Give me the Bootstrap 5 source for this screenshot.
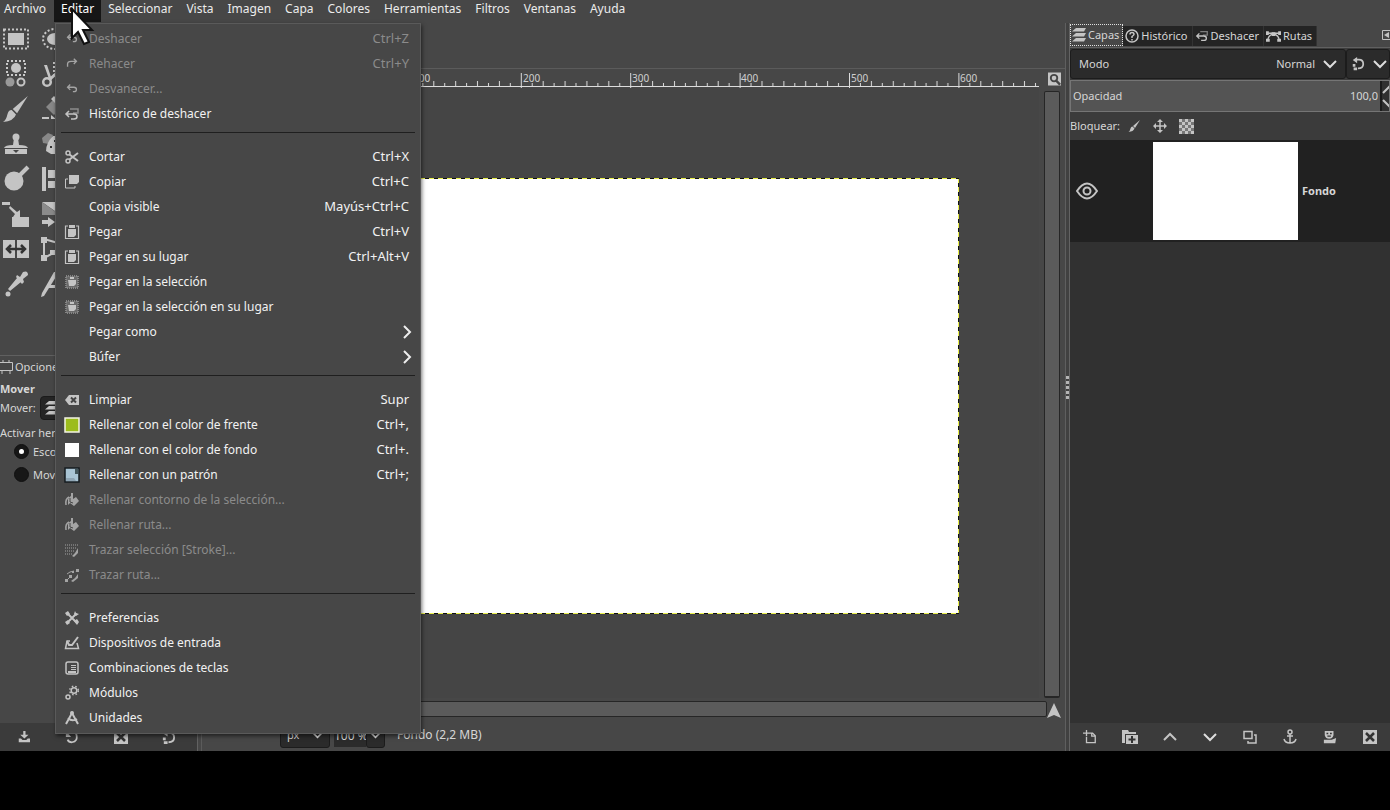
<!DOCTYPE html>
<html lang="es">
<head>
<meta charset="utf-8">
<meta name="viewport" content="width=device-width, initial-scale=1">
<title>Editor de imágenes</title>
<link href="https://cdn.jsdelivr.net/npm/bootstrap@5.3.0/dist/css/bootstrap.min.css" rel="stylesheet">
<style>
body{background:#000;color:#d6d6d6;font-family:"Noto Sans","Open Sans",sans-serif;font-size:12px;line-height:16px}
.studio{background:#474747;margin-bottom:59px;min-height:0}
svg{display:block;flex:none;fill:#c4c4c4;stroke:none;stroke-width:1.5}
.ln{fill:none;stroke:#c4c4c4}
.small-ui{font-family:"Noto Sans","Open Sans",sans-serif;font-size:11px;line-height:14px}
/* menu bar */
.menubar{height:23px;padding:0;align-items:stretch}
.menubar .navbar-nav .nav-link{padding:1px 7px 0;color:#ececec;height:22px;line-height:16px;white-space:nowrap}
.menubar .navbar-nav .first-item{padding-left:4px;padding-right:8px}
.menubar .navbar-nav .nav-link.active{background:#161616;color:#fff}
.edit-menu{--bs-dropdown-bg:#474747;margin:0!important;top:23px!important;left:1px!important;width:366px;padding:2px 0 3px;border:1px solid #5a5a5a;border-radius:0;font-size:12px;box-shadow:1px 2px 4px rgba(0,0,0,.55)}
.edit-menu .dropdown-item{display:flex;align-items:center;height:25px;padding:0 11px 0 8px;color:#f2f2f2;line-height:16px}
.edit-menu .dropdown-item svg,.edit-menu .slot{width:16px;height:16px;margin-right:9px;flex:none}
.edit-menu .dropdown-item:disabled{color:#8b8b8b}
.edit-menu .dropdown-item:disabled svg{opacity:.75}
.edit-menu .keys{margin-left:auto;font-size:13px;padding-bottom:2px}
.edit-menu .more{margin:0 -4px 0 auto!important;width:12px!important}
.edit-menu .dropdown-divider{margin:6px 5px 11px;border-top:1px solid #1f1f1f;opacity:1}
.pointer{position:absolute;left:17px;top:8px;z-index:1100;pointer-events:none}
/* left side */
.tool-dock{width:198px;border-right:1px solid #626262}
.tools{display:grid;grid-template-columns:repeat(2,34px);grid-auto-rows:35px;height:332px;align-content:start}
.tools button,.bar button,.plain{background:none;border:0;padding:0;color:inherit}
.tools button{display:flex;align-items:flex-start;padding:2px 0 0 2px}
.options{border-top:1px solid #606060}
.options label,.options span{white-space:nowrap}
.opt-tab{height:22px}
.opt-note{padding-top:6px}
.mode-btn{width:60px;height:24px;background:#252525!important;border:1px solid #1b1b1b!important;border-radius:4px}
.radio-dark{appearance:none;width:15px;height:15px;border-radius:50%;background:#171717;border:1px solid #111;margin:0 4px 0 14px;display:grid;place-content:center}
.radio-dark:checked::after{content:"";width:5px;height:5px;border-radius:50%;background:#fff}
.bar{height:28px;background:#3b3b3b;display:grid;grid-auto-flow:column;grid-auto-columns:1fr}
.bar button{display:flex;justify-content:center;align-items:center}
.tool-dock .bar{padding-right:4px}
/* image window */
.image-pane{margin-top:45px;border-top:1px solid #5b5b5b;border-left:1px solid #5b5b5b;margin-left:3px}
.ruler-row{height:19px}
.ruler text{font:10px "Noto Sans",sans-serif;fill:#cfcfcf}
.ruler line{stroke:#dcdcdc;stroke-width:1}
.side-ruler{width:20px}
.canvas-area{background:#454545;padding-top:6px}
.sheet{width:656px;height:436px;background:
 repeating-linear-gradient(90deg,#eaf04a 0 5px,#111 5px 9px) top/100% 1px no-repeat,
 repeating-linear-gradient(90deg,#eaf04a 0 5px,#111 5px 9px) bottom/100% 1px no-repeat,
 repeating-linear-gradient(#eaf04a 0 5px,#111 5px 9px) right/1px 100% no-repeat,#fff}
.gutter{width:26px;padding:3px 5px 0 5px}
.thumb-y{width:16px;background:#5b5b5b;border:1px solid #262626;border-bottom-width:2px;border-radius:2px}
.scroll-row{height:18px;margin-top:3px}
.thumb-x{height:16px;background:#5b5b5b;border:1px solid #262626;border-radius:2px;margin-left:24px}
.status{height:32px;padding-left:78px}
.status select,.status input,.combo select{appearance:none;background:transparent;border:0;color:inherit;padding:0;outline:0;font:inherit}
.dark-box{background:#2b2b2b;border:1px solid #1c1c1c;border-radius:3px}
.unit{width:50px;height:26px;padding:0 6px}
.zoom-in{width:32px;background:#2b2b2b!important;height:24px}
.zoom-dd{width:19px;height:26px;padding:0 3px}
/* right side */
.split{width:5px;border-right:1px solid #636363;background:#414141;border-left:1px solid #5f5f5f}
.split i{width:3px;height:3px;background:#b5b5b5;margin:1px 0;display:block}
.layer-dock{width:320px;background:#3b3b3b}
.dock-tabs{height:25px;padding-top:1px;background:#474747;border-bottom:1px solid #606060}
.dock-tabs button{height:20px;margin-top:2px;border:0;border-right:1px solid #333;padding:0 4px 0 2px;background:#242424;color:#d6d6d6;display:flex;align-items:center;gap:2px}
.dock-tabs button.on{background:#474747;border:1px dotted #e0e0e0;height:22px;margin-top:0;padding:0 3px 0 1px}
.dual{margin:1px 0}
.combo{height:30px}
.combo.side{width:44px}
.combo select{flex:1;text-align-last:right;margin-right:8px;min-width:0}
.opacity{height:32px;background:#545454;border:1px solid #757575;overflow:hidden}
.opacity label{padding-left:2px}
.opacity input{appearance:none;width:60px;text-align:right;background:none;border:0;color:inherit;padding:0 2px 0 0;font:inherit}
.spin{width:9px;background:#303030;border-left:2px solid #1b1b1b;overflow:hidden}
.lock-row{height:28px}
.layers{background:#313131}
.layer-row{height:102px;background:#212121;padding-left:6px}
.preview{width:145px;height:98px;background:#fff;margin-left:55px}
.dim{opacity:.55}
</style>
</head>
<body class="vh-100 d-flex flex-column overflow-hidden">

<svg width="0" height="0" class="position-absolute" aria-hidden="true"><defs>
<symbol id="undo" viewBox="-1 0 18 18"><path d="M6 4 3 7l3 3M3 7h7q3 0 3 2.500T10 12H9" class="ln"/></symbol>
<symbol id="redo" viewBox="-1 0 18 18"><path d="M10 3l3 3-3 3M13 6H7Q3 6 3 9v3" class="ln"/></symbol>
<symbol id="hist" viewBox="0 0 16 16"><path d="M6 3h8v4H9" class="ln dim"/><path d="M5 5 2 8l3 3M2 8h8q3 0 3 2.500T10 13H7" class="ln"/></symbol>
<symbol id="cut" viewBox="0 0 16 16"><g class="ln"><circle cx="4" cy="4" r="2"/><circle cx="4" cy="12" r="2"/><path d="M5.500 5.500 14 12M5.500 10.500 14 4" stroke-width="2"/></g></symbol>
<symbol id="copy" viewBox="0 0 16 16"><path d="M5 1h10v7l-2 2H5z"/><path d="M4 5H1.500v9H11v-2" class="ln" stroke-width="1"/></symbol>
<symbol id="paste" viewBox="0 0 16 16"><path d="M4 2H1.500v12.500h13V2H12" class="ln" stroke-width="1.200"/><path d="M5 1h6v3H5zM4 5h8v6l-2 2H4z"/></symbol>
<symbol id="pastein" viewBox="0 0 16 16"><path d="M2 2h12v12H2z" fill="#6a6a6a" stroke="#858585" stroke-width="2" stroke-dasharray="1 1"/><path d="M6 3h4v2H6zM4 6h8v4l-2 2H5z"/></symbol>
<symbol id="clear" viewBox="0 0 16 16"><path d="M1 8l4-5h10v10H5z"/><path d="M7 5.500l5 5m0-5-5 5" stroke="#444" stroke-width="2"/></symbol>
<symbol id="bucket" viewBox="0 0 16 16"><path d="M2 13q-1-6 3-8" class="ln"/><path d="M4 7q1-2 3-3V1h2v6l3-2 3 4-5 5-4-3-2 2z"/><path d="M6 6v4l3 1" class="ln" style="stroke:#474747" stroke-width="1"/></symbol>
<symbol id="strokesel" viewBox="0 0 16 16"><path d="M1 3h13M1 6h12M1 9h9M1 12h8" stroke="#858585" stroke-width="2" stroke-dasharray="1 1"/><path d="M14 6v5l-4 4-2-1 3-3z"/></symbol>
<symbol id="strokepath" viewBox="0 0 16 16"><path d="M3 13l3-3m6-5 2-3M3 7l3-2 4-1" class="ln" stroke-width="1"/><path d="M14 7v4l-5 4-2-1 4-3zM1 12h3v3H1zM5 8h3v3H5zM12 2h3v3h-3zM8 4h2v2H8z"/></symbol>
<symbol id="prefs" viewBox="0 0 16 16"><path d="M3 3l10 10M12.500 3.500 3 13" class="ln" stroke-width="2"/><path d="M1 3l3-2 2 3-3 2zM10 11l3-2 2 3-2 3zM10 4l1-3 1 2 3 1-3 2zM1 12l3-2 2 3-3 2z"/></symbol>
<symbol id="input" viewBox="0 0 16 16"><path d="M6 6H3L1.500 13.500h13L13 8" class="ln"/><path d="M14 2 8 10H5L3 6" class="ln" stroke-width="2"/></symbol>
<symbol id="keys" viewBox="0 0 16 16"><rect x="2" y="2" width="12" height="12" rx="2" class="ln"/><path d="M7 5h5v1H7zM7 7h5v1H7zM7 9h5v1H7zM4 11h8v2H4z"/></symbol>
<symbol id="gears" viewBox="0 0 16 16"><circle cx="10" cy="5.500" r="2.800" class="ln"/><circle cx="10" cy="5.500" r="4.300" class="ln" stroke-dasharray="1.500 2"/><circle cx="4" cy="12" r="2" class="ln"/></symbol>
<symbol id="units" viewBox="0 0 16 16"><path d="M2 14 8 3l6 11M4 8q4 4 9 1" class="ln" stroke-width="2"/><circle cx="8" cy="3" r="2"/></symbol>
<symbol id="right" viewBox="0 0 12 16"><path d="M3 2l6 6-6 6" fill="none" stroke="#eee" stroke-width="2"/></symbol>
<symbol id="down" viewBox="0 0 14 14"><path d="M1 4l6 6 6-6" fill="none" stroke="#ddd" stroke-width="2"/></symbol>
<symbol id="brush" viewBox="0 0 26 26"><path d="M24 1 14 17l-4-4zM9 14l4 4q-2 6-12 7 3-2 4-7 1-4 4-4z"/></symbol>
<symbol id="reset" viewBox="0 0 16 16"><path d="M5 3h4q5 0 5 5t-6 5" class="ln" stroke-width="2"/><path d="M7 0v7L2 3.500zM2 8h3v3H2zM3 12h4v3H3z"/></symbol>
<symbol id="trash" viewBox="0 0 16 16"><path d="M1 1h14v14H1z"/><path d="M4 4l8 8m0-8-8 8" stroke="#333" stroke-width="2.500"/></symbol>
<symbol id="sheets" viewBox="0 0 14 16"><path d="M4 1h10l-2 3.500H0zM4 6h10l-2 3.500H0zM4 11h10l-2 3.500H0z"/></symbol>
</defs></svg>

<div class="studio flex-fill d-flex flex-column position-relative">
  <nav class="navbar navbar-expand menubar">
    <ul class="navbar-nav">
      <li class="nav-item"><a class="nav-link first-item" href="#">Archivo</a></li>
      <li class="nav-item dropdown"><a class="nav-link active" href="#">Editar</a>
        <svg class="pointer" width="24" height="38" viewBox="0 0 24 38"><path d="M1 1v29l6-6 6 12 5-2-6-12h9z" fill="#fff" stroke="#111" stroke-width="2"/></svg>
        <div class="dropdown-menu edit-menu show">
          <button class="dropdown-item" disabled><svg><use href="#undo"/></svg>Deshacer<span class="keys">Ctrl+Z</span></button>
          <button class="dropdown-item" disabled><svg><use href="#redo"/></svg>Rehacer<span class="keys">Ctrl+Y</span></button>
          <button class="dropdown-item" disabled><svg><use href="#undo"/></svg>Desvanecer...</button>
          <button class="dropdown-item"><svg><use href="#hist"/></svg>Histórico de deshacer</button>
          <hr class="dropdown-divider">
          <button class="dropdown-item"><svg><use href="#cut"/></svg>Cortar<span class="keys">Ctrl+X</span></button>
          <button class="dropdown-item"><svg><use href="#copy"/></svg>Copiar<span class="keys">Ctrl+C</span></button>
          <button class="dropdown-item"><span class="slot"></span>Copia visible<span class="keys">Mayús+Ctrl+C</span></button>
          <button class="dropdown-item"><svg><use href="#paste"/></svg>Pegar<span class="keys">Ctrl+V</span></button>
          <button class="dropdown-item"><svg><use href="#paste"/></svg>Pegar en su lugar<span class="keys">Ctrl+Alt+V</span></button>
          <button class="dropdown-item"><svg><use href="#pastein"/></svg>Pegar en la selección</button>
          <button class="dropdown-item"><svg><use href="#pastein"/></svg>Pegar en la selección en su lugar</button>
          <button class="dropdown-item"><span class="slot"></span>Pegar como<svg class="more"><use href="#right"/></svg></button>
          <button class="dropdown-item"><span class="slot"></span>Búfer<svg class="more"><use href="#right"/></svg></button>
          <hr class="dropdown-divider">
          <button class="dropdown-item"><svg><use href="#clear"/></svg>Limpiar<span class="keys">Supr</span></button>
          <button class="dropdown-item"><svg viewBox="0 0 16 16"><path d="M1 1h14v14H1z" fill="#9cbc1c" stroke="#f4f4e4"/></svg>Rellenar con el color de frente<span class="keys">Ctrl+,</span></button>
          <button class="dropdown-item"><svg viewBox="0 0 16 16"><path d="M1 1h14v14H1z" fill="#fff"/></svg>Rellenar con el color de fondo<span class="keys">Ctrl+.</span></button>
          <button class="dropdown-item"><svg viewBox="0 0 16 16"><path d="M1 1h14v14H1z" fill="#a9c4d4" stroke="#161c20"/><path d="M11 2h3v5h-3z" fill="#43565b"/><path d="M2 11h8l2 3H2z" fill="#8fa5b4"/></svg>Rellenar con un patrón<span class="keys">Ctrl+;</span></button>
          <button class="dropdown-item" disabled><svg><use href="#bucket"/></svg>Rellenar contorno de la selección...</button>
          <button class="dropdown-item" disabled><svg><use href="#bucket"/></svg>Rellenar ruta...</button>
          <button class="dropdown-item" disabled><svg><use href="#strokesel"/></svg>Trazar selección [Stroke]...</button>
          <button class="dropdown-item" disabled><svg><use href="#strokepath"/></svg>Trazar ruta...</button>
          <hr class="dropdown-divider">
          <button class="dropdown-item"><svg><use href="#prefs"/></svg>Preferencias</button>
          <button class="dropdown-item"><svg><use href="#input"/></svg>Dispositivos de entrada</button>
          <button class="dropdown-item"><svg><use href="#keys"/></svg>Combinaciones de teclas</button>
          <button class="dropdown-item"><svg><use href="#gears"/></svg>Módulos</button>
          <button class="dropdown-item"><svg><use href="#units"/></svg>Unidades</button>
        </div>
      </li>
      <li class="nav-item"><a class="nav-link" href="#">Seleccionar</a></li>
      <li class="nav-item"><a class="nav-link" href="#">Vista</a></li>
      <li class="nav-item"><a class="nav-link" href="#">Imagen</a></li>
      <li class="nav-item"><a class="nav-link" href="#">Capa</a></li>
      <li class="nav-item"><a class="nav-link" href="#">Colores</a></li>
      <li class="nav-item"><a class="nav-link" href="#">Herramientas</a></li>
      <li class="nav-item"><a class="nav-link" href="#">Filtros</a></li>
      <li class="nav-item"><a class="nav-link" href="#">Ventanas</a></li>
      <li class="nav-item"><a class="nav-link" href="#">Ayuda</a></li>
    </ul>
  </nav>

  <div class="d-flex flex-fill">
    <aside class="tool-dock d-flex flex-column small-ui">
      <div class="tools">
        <button aria-label="Selección rectangular"><svg width="28" height="28" viewBox="0 0 28 28"><path d="M2 4.500h24v19H2z" fill="none" stroke="#c8c8c8" stroke-width="2" stroke-dasharray="2 2"/><path d="M6 8h16v12H6z"/></svg></button>
        <button aria-label="Selección elíptica"><svg width="28" height="28" viewBox="0 0 28 28"><ellipse cx="19" cy="14" rx="8" ry="6"/><ellipse cx="19" cy="14" rx="12" ry="10" fill="none" stroke="#c8c8c8" stroke-width="2" stroke-dasharray="2 2"/></svg></button>
        <button aria-label="Selección por color"><svg width="28" height="28" viewBox="0 0 28 28"><path d="M5 1h18v14H5z" fill="none" stroke="#c8c8c8" stroke-width="2" stroke-dasharray="2 2"/><circle cx="14" cy="8" r="5"/><circle cx="8" cy="22" r="4.500" fill="#999"/><circle cx="19" cy="22" r="3.500" class="ln" stroke-width="2"/></svg></button>
        <button aria-label="Tijeras"><svg width="28" height="28" viewBox="0 0 28 28"><circle cx="11" cy="22" r="3.800" class="ln" stroke-width="2.500"/><path d="M8 5l3 0 5 15-3-1zM13 18l8-7v4l-6 5z"/><path d="M18 2v14" stroke="#c8c8c8" stroke-width="2" stroke-dasharray="2 2"/></svg></button>
        <button aria-label="Pincel"><svg width="28" height="28"><use href="#brush"/></svg></button>
        <button aria-label="Goma"><svg width="28" height="28" viewBox="0 0 28 28"><path d="M10 12l7-7 8 8-7 7z" fill="#888"/><path d="M15 4l3-3 8 8-3 3zM6 22h7v2H6z"/><path d="M15 20l5 4h-5z"/></svg></button>
        <button aria-label="Clonar"><svg width="28" height="28" viewBox="0 0 28 28"><circle cx="14" cy="7" r="3.500"/><path d="M12 8h4l1 7q8 0 9 3H2q1-3 9-3zM3 19h22v5H3z"/><path d="M11 20h6l-3 3z" fill="#474747"/></svg></button>
        <button aria-label="Sanear"><svg width="28" height="28" viewBox="0 0 28 28"><path d="M6 8l6-5 5 2-4 9-6-1z" fill="#888"/><path d="M17 6q-7 7-7 15l5 3h11V6z"/><path d="M14 17h2m2-6h1m0 9h2" stroke="#333" stroke-width="2"/></svg></button>
        <button aria-label="Blanquear"><svg width="28" height="28" viewBox="0 0 28 28"><circle cx="12" cy="16" r="9.500"/><path d="M16 12 26 2" stroke="#c4c4c4" stroke-width="4"/></svg></button>
        <button aria-label="Alinear"><svg width="28" height="28" viewBox="0 0 28 28"><path d="M6 2h4v24H6zM12 5h14v8H12zM12 16h14v7H12z"/></svg></button>
        <button aria-label="Escalar"><svg width="28" height="28" viewBox="0 0 28 28"><path d="M0 2h8v3H0zM10 17h17v10H10zM8 6l7 6 3-2v7h-7l2-3-6-6z"/></svg></button>
        <button aria-label="Degradado"><svg width="28" height="28" viewBox="0 0 28 28"><path d="M6 2h20v14z"/><path d="M6 2v13h18z" fill="#8a8a8a"/><path d="M6 20h6v-3l7 5-7 5v-3H6z"/></svg></button>
        <button aria-label="Voltear"><svg width="28" height="28" viewBox="0 0 28 28"><path d="M1 5h12v18H1zM15 5h12v18H15z"/><path d="M5 14h18M9 10l-4 4 4 4M19 10l4 4-4 4" fill="none" stroke="#333" stroke-width="2.500"/></svg></button>
        <button aria-label="Rutas"><svg width="28" height="28" viewBox="0 0 28 28"><path d="M8 5v18l15-8M8 4l14 4" class="ln" stroke-width="2"/><path d="M5 2h6v6H5zM5 20h6v6H5zM14 15h6v5h-6z"/></svg></button>
        <button aria-label="Recoger color"><svg width="28" height="28" viewBox="0 0 28 28"><circle cx="6" cy="24" r="2.500"/><path d="M8 21l-2-2 9-11 4 4zM15 5l3 2 3-5q5-2 5 3l-5 4 1 3-2 2-6-7z"/></svg></button>
        <button aria-label="Medir"><svg width="28" height="28" viewBox="0 0 28 28"><path d="M18 2h5L8 26l-3 1 1-4zM14 15h10v3H12z"/><path d="M20 5l6 21" class="ln"/></svg></button>
      </div>
      <div class="options">
        <div class="opt-tab d-flex align-items-center"><svg width="15" height="16" viewBox="0 0 15 16"><path d="M0 3.500h12.500v8H0M3 1v2m6-2v2M2 12v3m8-3v3" class="ln" stroke-width="1"/></svg><span>Opciones</span></div>
        <div class="fw-bold pt-1">Mover</div>
        <div class="d-flex align-items-center gap-1"><span>Mover:</span><button class="plain mode-btn ps-1" aria-label="Capa"><svg width="14" height="16"><use href="#sheets"/></svg></button></div>
        <div class="opt-note">Activar herramienta</div>
        <label class="d-flex align-items-center pt-1"><input type="radio" name="pick" class="radio-dark" checked>Escoger</label>
        <label class="d-flex align-items-center pt-1 mt-1"><input type="radio" name="pick" class="radio-dark">Mover</label>
      </div>
      <div class="bar mt-auto">
        <button aria-label="Guardar"><svg width="12" height="12" viewBox="0 0 16 16"><path d="M7 0h3v5h4l-5.500 5L3 5h4zM1 10h3l2 2h5l2-2h3v5H1z"/></svg></button>
        <button aria-label="Restaurar"><svg width="14" height="14" viewBox="0 0 16 16"><path d="M4 3q6-3 9 2 2 8-5 9-4 0-5-3" class="ln" stroke-width="2"/><path d="M1 1v7h6z"/></svg></button>
        <button aria-label="Borrar"><svg width="16" height="16"><use href="#trash"/></svg></button>
        <button aria-label="Reiniciar"><svg width="15" height="15"><use href="#reset"/></svg></button>
      </div>
    </aside>

    <main class="flex-fill d-flex flex-column overflow-hidden">
      <div class="image-pane flex-fill d-flex flex-column">
        <div class="ruler-row d-flex">
          <div class="side-ruler"></div>
          <div class="flex-fill overflow-hidden">
            <svg class="ruler" width="100%" height="19">
              <defs><pattern id="ticks" x="80" width="109.400" height="19" patternUnits="userSpaceOnUse">
                <path d="M.5 4v15M22.400 12v6M44.300 12v6M66.100 12v6M88 12v6M11.400 14v4M33.300 14v4M55.200 14v4M77.100 14v4M98.900 14v4" stroke="#dcdcdc" stroke-width="1"/></pattern></defs>
              <rect width="100%" height="19" fill="url(#ticks)"/>
              <line x1="0" x2="100%" y1="17.500" y2="17.500"/>
              <text x="82" y="13">0</text><text x="191" y="13">100</text><text x="301" y="13">200</text><text x="410" y="13">300</text><text x="519" y="13">400</text><text x="629" y="13">500</text><text x="738" y="13">600</text>
            </svg>
          </div>
          <div class="gutter"><button class="plain ps-1" aria-label="Ampliar"><svg width="13" height="14" viewBox="0 0 14 14"><path d="M0 0h14v14H0z"/><path d="M8 8l5 5" stroke="#444" stroke-width="2.500"/><circle cx="6.500" cy="6" r="3.500" fill="none" stroke="#444" stroke-width="2"/></svg></button></div>
        </div>
        <div class="flex-fill d-flex">
          <div class="side-ruler"></div>
          <div class="canvas-area flex-fill d-flex align-items-center justify-content-center"><div class="sheet"></div></div>
          <div class="gutter d-flex"><div class="thumb-y"></div></div>
        </div>
        <div class="scroll-row d-flex">
          <div class="thumb-x flex-fill"></div>
          <button class="plain pe-1" aria-label="Navegar"><svg width="14" height="15" viewBox="0 0 14 15"><path d="M7 0l7 15-7-3-7 3z"/></svg></button>
        </div>
        <div class="status d-flex align-items-center">
          <div class="dark-box unit d-flex align-items-center small-ui"><select class="flex-fill" aria-label="Unidad"><option>px</option></select><svg width="11" height="12"><use href="#down"/></svg></div>
          <input class="zoom-in small-ui ms-1" aria-label="Ampliación" value="100 %">
          <div class="dark-box zoom-dd d-flex align-items-center"><svg width="11" height="12"><use href="#down"/></svg></div>
          <span class="ps-1 ms-2">Fondo (2,2 MB)</span>
        </div>
      </div>
    </main>

    <div class="split d-flex flex-column justify-content-center"><i></i><i></i><i></i><i></i><i></i></div>

    <aside class="layer-dock d-flex flex-column small-ui">
      <div class="dock-tabs d-flex">
        <button class="on"><svg width="14" height="16"><use href="#sheets"/></svg>Capas</button>
        <button><svg width="14" height="14" viewBox="0 0 14 14"><circle cx="7" cy="7" r="6" class="ln"/><path d="M5 5.500q0-2 2-2t2 2Q9 6 7 7.500V9m0 1v1.500" class="ln"/></svg>Histórico</button>
        <button><svg width="14" height="14"><use href="#hist"/></svg>Deshacer</button>
        <button><svg width="15" height="14" viewBox="0 0 16 14"><path d="M2 12q0-6 6-7 6 1 6 7M2 4h12" class="ln"/><path d="M0 2h3v4H0zM6 3h4v4H6zM13 2h3v4h-3zM0 10h4v3H0zM12 10h4v3h-4z"/></svg>Rutas</button>
        <svg class="ms-auto mt-1" width="8" height="16" viewBox="0 0 8 16"><path d="M.5 2.500H9v9H.5z" class="ln" stroke-width="1"/><path d="M7 4v6L2 7z"/></svg>
      </div>
      <div class="d-flex dual">
        <div class="dark-box combo flex-fill d-flex align-items-center ps-2 pe-2"><label for="mode">Modo</label><select id="mode"><option>Normal</option></select><svg width="14" height="14"><use href="#down"/></svg></div>
        <div class="dark-box combo side d-flex align-items-center ps-1"><svg width="14" height="14"><use href="#reset"/></svg><svg class="ms-2" width="14" height="14"><use href="#down"/></svg></div>
      </div>
      <div class="opacity d-flex align-items-stretch"><label for="alpha" class="align-self-center me-auto">Opacidad</label><input id="alpha" value="100,0"><div class="spin"><svg width="14" height="30" viewBox="0 0 14 30"><path d="M1 12l6-6 6 6M1 19l6 6 6-6" class="ln" stroke-width="2"/></svg></div></div>
      <div class="lock-row d-flex align-items-center"><span>Bloquear:</span>
        <button class="plain ms-2" aria-label="Píxeles"><svg width="13" height="14"><use href="#brush"/></svg></button>
        <button class="plain ms-2 ps-1" aria-label="Posición"><svg width="14" height="14" viewBox="0 0 14 14"><path d="M7 1v12M1 7h12" class="ln"/><path d="M7 0l3 3H4zM7 14l3-3H4zM0 7l3-3v6zM14 7l-3-3v6z"/></svg></button>
        <button class="plain ms-2 ps-1" aria-label="Canal alfa"><svg width="15" height="15" viewBox="0 0 15 15"><path d="M0 0h15v15H0z" fill="#777"/><path d="M0 0h3v3H0zM6 0h3v3H6zM12 0h3v3h-3zM3 3h3v3H3zM9 3h3v3H9zM0 6h3v3H0zM6 6h3v3H6zM12 6h3v3h-3zM3 9h3v3H3zM9 9h3v3H9zM0 12h3v3H0zM6 12h3v3H6zM12 12h3v3h-3z"/></svg></button>
      </div>
      <div class="layers flex-fill">
        <div class="layer-row d-flex align-items-center">
          <button class="plain" aria-label="Visible"><svg width="22" height="18" viewBox="0 0 22 18"><path d="M1 9q10-15 20 0-10 15-20 0z" class="ln" stroke-width="2"/><circle cx="11" cy="9" r="3.500" class="ln" stroke-width="2"/></svg></button>
          <div class="preview"></div><strong class="ps-1">Fondo</strong>
        </div>
      </div>
      <div class="bar">
        <button aria-label="Capa nueva"><svg width="14" height="14" viewBox="0 0 16 16"><path d="M7 3.500h4l3 3v8H4V8M4 0v7M0 3.500h7M10 3v4h4" class="ln"/></svg></button>
        <button aria-label="Grupo nuevo"><svg width="16" height="16" viewBox="0 0 16 16"><path d="M0 1h6l1 2h7v2H3v9H0zM4 6h12v9H4z"/><path d="M10 7v7M6.500 10.500h7" stroke="#333" stroke-width="2"/></svg></button>
        <button aria-label="Subir"><svg width="14" height="14" viewBox="0 0 14 14"><path d="M1 10l6-6 6 6" class="ln" stroke-width="2"/></svg></button>
        <button aria-label="Bajar"><svg width="14" height="14"><use href="#down"/></svg></button>
        <button aria-label="Duplicar"><svg width="14" height="14" viewBox="0 0 14 14"><path d="M1 1.500h8v7H1zM11 5h2v8H5v-2" class="ln"/></svg></button>
        <button aria-label="Anclar"><svg width="14" height="16" viewBox="0 0 14 16"><circle cx="7" cy="3" r="2" class="ln"/><path d="M7 5v9M4 7h6M1 10q1 4 6 4t6-4" class="ln"/></svg></button>
        <button aria-label="Máscara"><svg width="14" height="14" viewBox="0 0 16 16"><path d="M2 1h10v5q-1 4-5 4T2 6zM1 11h9l5-2-1 6H1z"/><path d="M4 4h2m2 0h2M5 7h4" stroke="#333"/></svg></button>
        <button aria-label="Eliminar"><svg width="16" height="16"><use href="#trash"/></svg></button>
      </div>
    </aside>
  </div>
</div>
<script src="https://cdn.jsdelivr.net/npm/bootstrap@5.3.0/dist/js/bootstrap.bundle.min.js"></script>
</body>
</html>
